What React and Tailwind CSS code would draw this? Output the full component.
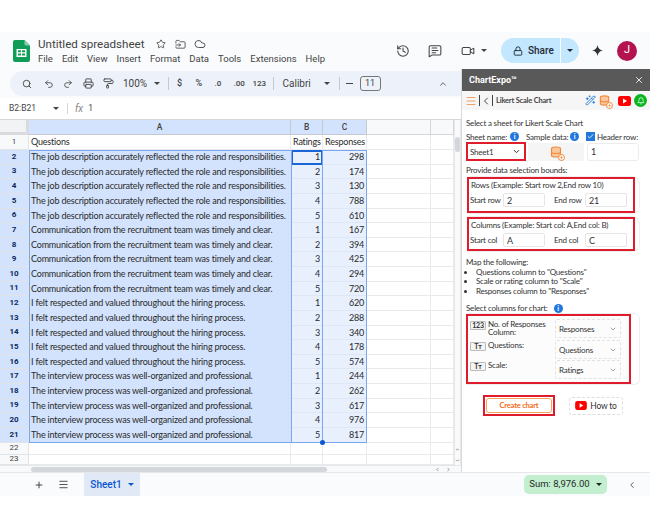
import {
  Star, FolderInput, Cloud, History, MessageSquareText, Video, Lock, Search, Undo2, Redo2, Printer,
  PaintRoller, ChevronDown, ChevronUp, ChevronLeft, ChevronRight, X, Menu, Plus, WandSparkles, Database, Bell, Check,
} from "lucide-react";

const JOB = "The job description accurately reflected the role and responsibilities.";
const COMM = "Communication from the recruitment team was timely and clear.";
const RESP = "I felt respected and valued throughout the hiring process.";
const INTER = "The interview process was well-organized and professional.";
const QUESTIONS = [JOB, COMM, RESP, INTER];
const RESPONSES = [298, 174, 130, 788, 610, 167, 394, 425, 294, 720, 620, 288, 340, 178, 574, 244, 262, 617, 976, 817];

const MENU = ["File", "Edit", "View", "Insert", "Format", "Data", "Tools", "Extensions", "Help"];

function Caret({ className = "" }) {
  return <span className={`inline-block w-0 h-0 border-l-[3px] border-r-[3px] border-t-[3.5px] border-l-transparent border-r-transparent ${className}`} />;
}

function SheetsLogo() {
  return (
    <svg width="17" height="22" viewBox="0 0 17 22">
      <path d="M0 2a2 2 0 0 1 2-2h9.5L17 5.5V20a2 2 0 0 1-2 2H2a2 2 0 0 1-2-2z" fill="#0f9d58" />
      <path d="M11.5 0 17 5.5h-4a1.5 1.5 0 0 1-1.5-1.5z" fill="#87ceac" />
      <path d="M3.5 9h10v8h-10z M5 10.3v2h3v-2z M9 10.3v2h3v-2z M5 13.6v2h3v-2z M9 13.6v2h3v-2z" fill="#fff" fillRule="evenodd" />
    </svg>
  );
}

function YouTube({ w = 13, h = 10 }) {
  return (
    <svg width={w} height={h} viewBox="0 0 13 10">
      <rect width="13" height="10" rx="2.5" fill="#f00" />
      <path d="M5 2.6 9 5 5 7.4z" fill="#fff" />
    </svg>
  );
}

function DbPlus({ size = 12 }) {
  return (
    <span className="relative inline-flex">
      <Database size={size} strokeWidth={2.4} className="text-[#f08a3c] fill-[#f8c79d]" />
      <span className="absolute -right-[3px] -bottom-[3px] w-[7px] h-[7px] rounded-full bg-white border border-[#f08a3c] flex items-center justify-center">
        <Plus size={5} strokeWidth={3} className="text-[#f08a3c]" />
      </span>
    </span>
  );
}

function Info() {
  return (
    <span className="inline-flex w-[9px] h-[9px] rounded-full bg-[#2277dd] text-white text-[7px] font-bold items-center justify-center leading-none">i</span>
  );
}

function GridRow({ num, a, b, c, selected, height = "h-[14.63px]", head }) {
  const side = selected ? "bg-[#e8f0fe] border-[#dfe7f5]" : "border-[#e8eaed]";
  const align = head ? "justify-start pl-[2px]" : "justify-end pr-[2px]";
  return (
    <div className={`flex ${height} overflow-hidden`}>
      <div className={`w-[29px] shrink-0 flex items-center justify-center text-[8px] tracking-normal [font-family:Roboto,sans-serif] border-b border-r border-[#e1e3e6] ${selected ? "bg-[#d3e3fd] font-bold text-[#0b2a5c]" : "bg-[#f8f9fa] text-[#444]"}`}>{num}</div>
      <div className={`w-[262px] shrink-0 flex items-center pl-[2px] whitespace-nowrap overflow-hidden border-b border-r ${selected ? "bg-[#d3e3fd] border-[#d3e3fd]" : "border-[#e8eaed]"}`}>{a}</div>
      <div className={`w-[32px] shrink-0 flex items-center ${align} border-b border-r ${side}`}>{b}</div>
      <div className={`w-[44px] shrink-0 flex items-center ${align} border-b border-r ${side}`}>{c}</div>
      <div className="w-[64px] shrink-0 border-b border-r border-[#e8eaed]" />
      <div className="w-[23px] shrink-0 border-b border-r border-[#e8eaed]" />
    </div>
  );
}

function Sheet() {
  return (
    <div className="relative flex-1 flex flex-col min-h-0 bg-white">
      <div className="flex flex-1 min-h-0">
        <div className="relative w-[454px] shrink-0 text-[9px] tracking-[-0.19px] text-[#2a2a2a] [font-family:Lato,sans-serif]">
          <div className="flex h-[15px] [font-family:Roboto,sans-serif] text-[8.5px] font-medium text-[#444]">
            <div className="w-[29px] bg-[#f1f3f4] border-r-[3px] border-b-[3px] border-[#d9dbde]" />
            <div className="w-[262px] bg-[#d3e3fd] flex items-center justify-center border-r border-b border-[#c4c9d0]">A</div>
            <div className="w-[32px] bg-[#d3e3fd] flex items-center justify-center border-r border-b border-[#c4c9d0]">B</div>
            <div className="w-[44px] bg-[#d3e3fd] flex items-center justify-center border-r border-b border-[#c4c9d0]">C</div>
            <div className="w-[64px] bg-[#f8f9fa] border-r border-b border-[#d5d7da]" />
            <div className="w-[23px] bg-[#f8f9fa] border-r border-b border-[#d5d7da]" />
          </div>
          <GridRow num={1} a="Questions" b="Ratings" c="Responses" height="h-[15px]" head />
          {RESPONSES.map((value, i) => (
            <GridRow
              key={i}
              num={i + 2}
              a={QUESTIONS[Math.floor(i / 5)]}
              b={(i % 5) + 1}
              c={value}
              selected
            />
          ))}
          <GridRow num={22} height="h-[12px]" />
          <GridRow num={23} height="h-[10.6px]" />
          {/* selection range */}
          <div className="absolute left-[29px] top-[30px] w-[338px] h-[292.6px] border border-[#7aa7ee] pointer-events-none" />
          <div className="absolute left-[291px] top-[30px] w-[32px] h-[15px] border-2 border-[#1a66d6] pointer-events-none" />
          <div className="absolute left-[291px] top-[30px] w-[32px] h-[292.6px] border-x border-[#7aa7ee] pointer-events-none" />
          <div className="absolute left-[320px] top-[320px] w-[5px] h-[5px] rounded-full bg-[#0b57d0]" />
        </div>
        <div className="w-[7px] shrink-0 bg-[#fafafa] border-l border-r border-[#e6e7e9] flex flex-col items-center relative">
          <div className="mt-[17px] w-[5px] h-[15px] rounded-full bg-[#d3d6da]" />
          <div className="mt-auto mb-[2px] flex flex-col gap-[6px] items-center">
            <ChevronUp size={5} strokeWidth={3} className="text-[#666]" />
            <ChevronDown size={5} strokeWidth={3} className="text-[#666]" />
          </div>
        </div>
      </div>
      <div className="h-[7px] flex items-center bg-[#f8f9fa] border-t border-[#e6e7e9]">
        <div className="w-[29px] shrink-0" />
        <div className="ml-[2px] w-[296px] h-[5px] rounded-full bg-[#d3d6da]" />
        <div className="ml-[108px] flex gap-[6px]">
          <ChevronLeft size={5} strokeWidth={3} className="text-[#666]" />
          <ChevronRight size={5} strokeWidth={3} className="text-[#666]" />
        </div>
      </div>
    </div>
  );
}

function Toolbar() {
  return (
    <div className="h-[29px] shrink-0 flex items-center">
      <div className="ml-[10px] w-[451px] h-[25px] rounded-l-full bg-[#edf2fa] flex items-center text-[#444] [font-family:Roboto,sans-serif]">
        <Search size={10} strokeWidth={2.2} className="ml-[12px] shrink-0" />
        <Undo2 size={10} strokeWidth={2} className="ml-[12px] shrink-0" />
        <Redo2 size={10} strokeWidth={2} className="ml-[9px] shrink-0" />
        <Printer size={11} strokeWidth={2} className="ml-[9.5px] shrink-0" />
        <PaintRoller size={11} strokeWidth={2} className="ml-[9px] shrink-0" />
        <span className="ml-[9.5px] w-[24px] text-[10px]">100%</span>
        <Caret className="ml-[7px] border-t-[#444]" />
        <span className="ml-[8px] h-[13px] w-px bg-[#c7c9cc]" />
        <span className="ml-[8px] w-[5px] text-[9px] font-medium">$</span>
        <span className="ml-[13.5px] w-[8px] text-[9px] font-medium">%</span>
        <span className="ml-[11px] w-[8px] text-[8px] font-medium">.0</span>
        <span className="ml-[11px] w-[12px] text-[8px] font-medium">.00</span>
        <span className="ml-[7px] w-[14px] text-[8px] font-medium">123</span>
        <span className="ml-[6px] h-[13px] w-px bg-[#c7c9cc]" />
        <span className="ml-[9px] w-[29px] text-[10px]">Calibri</span>
        <Caret className="ml-[12px] border-t-[#444]" />
        <span className="ml-[9px] h-[13px] w-px bg-[#c7c9cc]" />
        <span className="ml-[6px] w-[7px] h-px bg-[#444]" />
        <span className="ml-[7px] w-[21px] h-[15px] rounded-[3px] border border-[#777] flex items-center justify-center text-[9px]">11</span>
        <ChevronUp size={10} strokeWidth={2} className="ml-[57px] shrink-0" />
      </div>
    </div>
  );
}

function Bounds({ title, left, right, lv, rv, h, mt }) {
  return (
    <div className={`${mt} w-[173px] ${h} rounded-r-[8px] border-r border-t border-b border-[#eeeeee]`}>
      <div className="w-[168px] h-full border-2 border-[#e01b2c] pl-[1px] whitespace-nowrap">
        <div className="leading-[13px] pl-[1px]">{title}</div>
        <div className="flex items-center mt-[1px]">
          <span className="w-[33px]">{left}</span>
          <span className="w-[42px] h-[14px] border border-[#e5e5e5] rounded-[2px] pl-[3px] text-[9px] leading-[13px]">{lv}</span>
          <span className="ml-[9px] w-[31px]">{right}</span>
          <span className="w-[42px] h-[14px] border border-[#e5e5e5] rounded-[2px] pl-[3px] text-[9px] leading-[13px]">{rv}</span>
        </div>
      </div>
    </div>
  );
}

function MapRow({ badge, label, value, h }) {
  return (
    <div className={`flex items-start ${h}`}>
      <span className="mt-[2px] w-[16px] h-[9px] shrink-0 flex items-center justify-center bg-[#f4f4f4] border border-[#bbb] rounded-[1px] text-[7px] leading-none font-bold">{badge}</span>
      <span className="ml-[2px] w-[67px] leading-[8px] pt-[1px]">{label}</span>
      <div className="w-[66px] h-[19px] border border-dashed border-[#e2e2e2] rounded-[2px] flex items-center pl-[3px] pr-[3px] justify-between">
        <span>{value}</span>
        <ChevronDown size={8} strokeWidth={1.6} className="text-[#555]" />
      </div>
    </div>
  );
}

function Panel() {
  return (
    <div className="w-[189px] shrink-0 flex flex-col bg-white border-l border-[#d9d9d9] [font-family:Lato,sans-serif] text-[8px] tracking-[-0.2px] text-[#333] leading-[10px]">
      <div className="h-[22px] bg-[#595959] flex items-center justify-between pl-[7px] pr-[6px] text-white font-bold text-[9px] tracking-normal [font-family:Roboto,sans-serif]">
        <span>ChartExpo™</span>
        <X size={10} strokeWidth={2} />
      </div>
      <div className="h-[19px] bg-[#f6f6f6] flex items-center pl-[3px] pr-[3px]">
        <Menu size={12} strokeWidth={1.6} className="text-[#f28a3c]" />
        <span className="ml-[2px] h-[11px] w-px bg-[#444]" />
        <ChevronLeft size={12} strokeWidth={1.8} className="text-[#333]" />
        <span className="h-[11px] w-px bg-[#444]" />
        <span className="ml-[3px] text-[7.5px] font-bold text-[#444]">Likert Scale Chart</span>
        <span className="ml-auto flex items-center gap-[3px]">
          <WandSparkles size={11} strokeWidth={2} className="text-[#2277dd]" />
          <DbPlus size={11} />
          <span className="ml-[5px]"><YouTube /></span>
          <span className="w-[13px] h-[13px] rounded-full bg-[#0bb520] flex items-center justify-center">
            <Bell size={8} strokeWidth={2.2} className="text-white" />
          </span>
        </span>
      </div>
      <div className="pl-[4px] flex-1">
        <div className="mt-[8px]">Select a sheet for Likert Scale Chart</div>
        <div className="mt-[3px] flex items-center h-[11px] whitespace-nowrap">
          <span className="w-[44px]">Sheet name:</span>
          <Info />
          <span className="ml-[7px] w-[44px]">Sample data:</span>
          <Info />
          <span className="ml-[7px] w-[9px] h-[9px] bg-[#2277dd] flex items-center justify-center"><Check size={7} strokeWidth={3} className="text-white" /></span>
          <span className="ml-[2px]">Header row:</span>
        </div>
        <div className="flex">
          <div className="w-[60px] h-[19px] border-2 border-[#e01b2c] flex items-center justify-between pl-[2px] pr-[3px] bg-white">
            Sheet1
            <ChevronDown size={9} strokeWidth={2.4} className="text-[#222]" />
          </div>
          <div className="ml-[2px] mt-[1px] w-[56px] h-[18px] bg-[#f5f5f5] flex items-center justify-center"><DbPlus size={12} /></div>
          <div className="ml-[3px] mt-[1px] w-[52px] h-[18px] border border-[#ececec] rounded-[3px] pl-[3px] flex items-center text-[9px]">1</div>
        </div>
        <div className="mt-[4px]">Provide data selection bounds:</div>
        <div className="ml-[1px]">
          <Bounds title="Rows (Example: Start row 2,End row 10)" left="Start row" right="End row" lv="2" rv="21" h="h-[38px]" mt="mt-[1px]" />
          <Bounds title="Columns (Example: Start col: A,End col: B)" left="Start col" right="End col" lv="A" rv="C" h="h-[36px]" mt="mt-[2px]" />
        </div>
        <div className="mt-[6px] leading-[9.5px]">
          <div>Map the following:</div>
          <ul className="list-disc pl-[10px]">
            <li>Questions column to "Questions"</li>
            <li>Scale or rating column to "Scale"</li>
            <li>Responses column to "Responses"</li>
          </ul>
        </div>
        <div className="mt-[7px] flex items-center gap-[6px]">Select columns for chart: <Info /></div>
        <div className="w-[174px] h-[72px] rounded-r-[6px] border-r border-t border-b border-[#eeeeee]">
          <div className="w-[165px] h-full border-2 border-[#e01b2c] bg-[#fcfcfc] pl-[2px] pt-[3px]">
            <MapRow badge="123" label="No. of Responses Column:" value="Responses" h="h-[21px]" />
            <MapRow badge="Tт" label="Questions:" value="Questions" h="h-[20px]" />
            <MapRow badge="Tт" label="Scale:" value="Ratings" h="h-[20px]" />
          </div>
        </div>
        <div className="mt-[10px] ml-[17px] flex items-center">
          <div className="w-[72px] h-[21px] border-2 border-[#e01b2c] p-[1px]">
            <div className="h-full rounded-[3px] border border-[#f5a25f] flex items-center justify-center text-[#f26b21] text-[7.5px] font-bold">Create chart</div>
          </div>
          <div className="ml-[14px] w-[54px] h-[18px] border border-dashed border-[#ddd] rounded-[3px] flex items-center justify-center gap-[3px] text-[8.5px]">
            <YouTube w={12} h={9} /> How to
          </div>
        </div>
      </div>
    </div>
  );
}

export default function App() {
  return (
    <div className="w-[650px] h-[528px] bg-white flex flex-col overflow-hidden [font-family:Roboto,sans-serif]">
      <div className="h-[32px] shrink-0" />
      <div className="h-[37px] shrink-0 bg-[#f9fbfd] flex items-center relative">
        <div className="ml-[13px]"><SheetsLogo /></div>
        <div className="ml-[8px] flex flex-col">
          <div className="flex items-center text-[#444]">
            <span className="text-[11.6px] leading-[15px]">Untitled spreadsheet</span>
            <Star size={10} strokeWidth={2} className="ml-[12px]" />
            <FolderInput size={11} strokeWidth={1.8} className="ml-[9px]" />
            <Cloud size={12} strokeWidth={1.8} className="ml-[8px]" />
          </div>
          <div className="flex gap-[9px] mt-[1px] text-[9.5px] leading-[12px] text-[#444]">
            {MENU.map((m) => <span key={m}>{m}</span>)}
          </div>
        </div>
        <div className="ml-auto flex items-center text-[#444]">
          <History size={14} strokeWidth={1.8} />
          <MessageSquareText size={14} strokeWidth={1.8} className="ml-[18px]" />
          <Video size={14} strokeWidth={1.8} className="ml-[19px]" />
          <Caret className="ml-[6px] border-t-[#444]" />
          <div className="ml-[14px] w-[78px] h-[25px] rounded-full bg-[#c2e7ff] flex items-center text-[#1f2a37]">
            <Lock size={10} strokeWidth={2.2} className="ml-[12px]" />
            <span className="ml-[5px] text-[10px] font-medium">Share</span>
            <span className="ml-[6px] h-[25px] w-px bg-[#f9fbfd]" />
            <Caret className="ml-[6px] border-t-[#1f2a37]" />
          </div>
          <svg width="11" height="11" viewBox="0 0 24 24" className="ml-[13px]"><path d="M12 0c1 7 5 11 12 12-7 1-11 5-12 12-1-7-5-11-12-12 7-1 11-5 12-12z" fill="#333" /></svg>
          <div className="ml-[14px] mr-[13px] w-[20px] h-[20px] rounded-full bg-[#b5134f] text-white flex items-center justify-center text-[11px]">J</div>
        </div>
      </div>
      <div className="h-[403px] shrink-0 flex bg-[#f9fbfd]">
        <div className="w-[461px] shrink-0 flex flex-col">
          <Toolbar />
          <div className="h-[22px] shrink-0 bg-white flex items-center text-[8.5px] text-[#444] border-b border-[#d5d7da]">
            <span className="ml-[9px] w-[41px]">B2:B21</span>
            <Caret className="ml-[3px] border-t-[#444]" />
            <span className="ml-[8px] h-[11px] w-px bg-[#d5d7da]" />
            <span className="ml-[7px] [font-family:'Liberation_Serif',serif] italic text-[#888] text-[10px]">fx</span>
            <span className="ml-[5px]">1</span>
          </div>
          <Sheet />
        </div>
        <Panel />
      </div>
      <div className="h-[24px] shrink-0 bg-[#f9fbfd] border-t border-[#e6e7e9] flex items-center text-[#444]">
        <Plus size={10} strokeWidth={2.4} className="ml-[34px]" />
        <Menu size={11} strokeWidth={2} className="ml-[14px]" />
        <div className="ml-[15px] w-[56px] h-full bg-[#e1e9f7] flex items-center justify-center gap-[6px] text-[#0b57d0] text-[10px] font-medium">
          Sheet1
          <Caret className="border-t-[#0b57d0]" />
        </div>
        <div className="ml-[384px] w-[83px] h-[19px] rounded-[5px] bg-[#c4eed0] flex items-center justify-center gap-[6px] text-[9.5px] text-[#1f2a24]">
          Sum: 8,976.00
          <Caret className="border-t-[#1f2a24]" />
        </div>
        <ChevronLeft size={10} strokeWidth={2} className="ml-[20px]" />
      </div>
      <div className="flex-1" />
    </div>
  );
}
